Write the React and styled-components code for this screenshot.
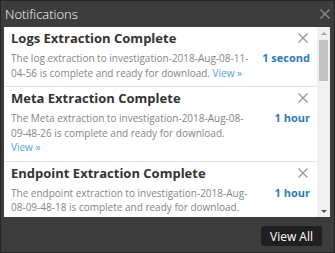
import styled, { createGlobalStyle } from 'styled-components'

const GlobalStyle = createGlobalStyle`
  body {
    margin: 0;
    background: #3c3c3c;
    font-family: "Open Sans", "DejaVu Sans", sans-serif;
  }
`

const notifications = [
  { id: 1, title: 'Logs Extraction Complete', kind: 'log', stamp: '2018-Aug-08-11-04-56', time: '1 second' },
  { id: 2, title: 'Meta Extraction Complete', kind: 'Meta', stamp: '2018-Aug-08-09-48-26', time: '1 hour' },
  { id: 3, title: 'Endpoint Extraction Complete', kind: 'endpoint', stamp: '2018-Aug-08-09-48-18', time: '1 hour' },
  { id: 4, title: 'Logs Extraction Complete', kind: 'log', stamp: '2018-Aug-08-09-41-02', time: '1 hour' },
  { id: 5, title: 'Meta Extraction Complete', kind: 'Meta', stamp: '2018-Aug-08-08-12-44', time: '2 hours' },
  { id: 6, title: 'Endpoint Extraction Complete', kind: 'endpoint', stamp: '2018-Aug-08-08-12-40', time: '2 hours' },
]

const Modal = styled.div`
  box-sizing: border-box;
  width: 335px;
  height: 253px;
  border: 1px solid #262626;
  background: #3c3c3c;
  display: flex;
  flex-direction: column;
`
const Header = styled.div`
  height: 26px;
  padding: 0 4px;
  display: flex;
  align-items: center;
  justify-content: space-between;
`
const HeaderTitle = styled.h1`
  margin: 0;
  font-size: 13px;
  font-weight: 300;
  color: #ffffff;
`
const CloseButton = styled.button`
  border: none;
  background: none;
  padding: 0;
  width: ${props => props.size}px;
  height: ${props => props.size}px;
  display: flex;
  cursor: pointer;
  svg {
    width: 100%;
    height: 100%;
  }
`
const Panel = styled.div`
  height: 190px;
  margin: 0 4px 0 3px;
  background: #ffffff;
  display: flex;
`
const List = styled.div`
  flex: 1;
  overflow: hidden;
`
const Scrollbar = styled.div`
  width: 13px;
  background: #f0f0f0;
  display: flex;
  flex-direction: column;
  align-items: center;
`
const ScrollArrow = styled.div`
  height: 12px;
  width: 100%;
  display: flex;
  align-items: center;
  justify-content: center;
  &::before {
    content: "";
    border-left: 3px solid transparent;
    border-right: 3px solid transparent;
    ${props => props.down
      ? 'border-top: 3px solid #505050;'
      : 'border-bottom: 3px solid #a3a3a3;'}
  }
`
const ScrollTrack = styled.div`
  flex: 1;
  width: 100%;
  padding: 1px 2px;
  box-sizing: border-box;
`
const ScrollThumb = styled.div`
  height: 41px;
  background: #c1c1c1;
`
const Item = styled.div`
  display: grid;
  grid-template-columns: 1fr 56px;
  padding: 2px 7px 6px 7px;
  border-bottom: 1px solid #e3e3e3;
`
const ItemTitle = styled.div`
  font-size: 13px;
  font-weight: 700;
  line-height: 18px;
  color: #333333;
  margin-bottom: 4px;
  white-space: nowrap;
`
const ItemClose = styled.div`
  justify-self: end;
  margin: 4px 2px 0 0;
`
const Description = styled.div`
  font-size: 10px;
  line-height: 14.5px;
  color: #858585;
`
const ViewLink = styled.a`
  color: #4fa3dc;
  text-decoration: none;
  white-space: nowrap;
`
const Time = styled.div`
  font-size: 11px;
  font-weight: 700;
  line-height: 14.5px;
  color: #2a7db6;
  text-align: right;
  white-space: nowrap;
`
const Footer = styled.div`
  flex: 1;
  display: flex;
  justify-content: flex-end;
  align-items: flex-start;
  padding: 9px 12px 0 0;
`
const ViewAllButton = styled.button`
  height: 20px;
  padding: 0 9px;
  border: none;
  border-radius: 2px;
  background: #1f1f1f;
  color: #ffffff;
  font-family: "Open Sans", "DejaVu Sans", sans-serif;
  font-size: 12px;
  cursor: pointer;
`

function XIcon({ color }) {
  return (
    <svg viewBox="0 0 10 10">
      <path d="M0.5 0.5 L9.5 9.5 M9.5 0.5 L0.5 9.5" stroke={color} strokeWidth="1.4" fill="none" />
    </svg>
  )
}

function Notification({ value }) {
  return (
    <Item>
      <ItemTitle>{value.title}</ItemTitle>
      <ItemClose>
        <CloseButton size={10}><XIcon color="#9a9a9a" /></CloseButton>
      </ItemClose>
      <Description>
        The {value.kind} extraction to investigation-{value.stamp} is complete and ready for download.{' '}
        <ViewLink href="#">View »</ViewLink>
      </Description>
      <Time>{value.time}</Time>
    </Item>
  )
}

export default function App() {
  return (
    <>
      <GlobalStyle />
      <Modal>
        <Header>
          <HeaderTitle>Notifications</HeaderTitle>
          <CloseButton size={10}><XIcon color="#8a8a8a" /></CloseButton>
        </Header>
        <Panel>
          <List>
            {notifications.map(n => <Notification key={n.id} value={n} />)}
          </List>
          <Scrollbar>
            <ScrollArrow />
            <ScrollTrack><ScrollThumb /></ScrollTrack>
            <ScrollArrow down />
          </Scrollbar>
        </Panel>
        <Footer>
          <ViewAllButton>View All</ViewAllButton>
        </Footer>
      </Modal>
    </>
  )
}
